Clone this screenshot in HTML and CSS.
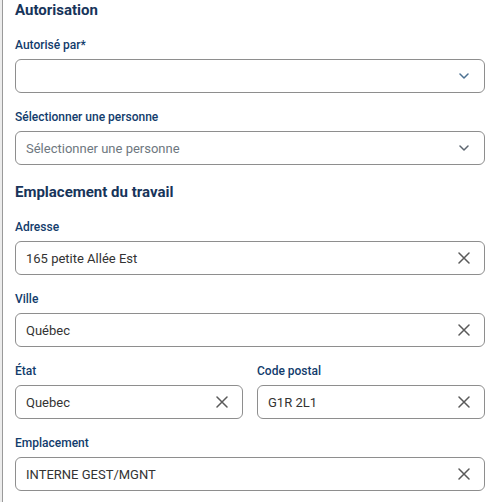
FILE: index.html
```html
<!DOCTYPE html>
<html lang="fr">
<head>
<meta charset="utf-8">
<link rel="stylesheet" href="styles.css">
</head>
<body>
<div class="page">
  <div class="panel">
    <section class="section">
      <h2 class="section-title">Autorisation</h2>
      <div class="fields">
        <div class="field">
          <label class="label">Autorisé par*</label>
          <div class="input">
            <span class="value"></span>
            <svg class="chevron chevron-blue" width="10" height="6" viewBox="0 0 10 6"><polyline points="1,1 5,5 9,1" fill="none" stroke="currentColor" stroke-width="1.5" stroke-linecap="round" stroke-linejoin="round"/></svg>
          </div>
        </div>
        <div class="field">
          <label class="label">Sélectionner une personne</label>
          <div class="input">
            <span class="value placeholder">Sélectionner une personne</span>
            <svg class="chevron" width="10" height="6" viewBox="0 0 10 6"><polyline points="1,1 5,5 9,1" fill="none" stroke="currentColor" stroke-width="1.5" stroke-linecap="round" stroke-linejoin="round"/></svg>
          </div>
        </div>
      </div>
    </section>
    <section class="section">
      <h2 class="section-title">Emplacement du travail</h2>
      <div class="fields">
        <div class="field">
          <label class="label">Adresse</label>
          <div class="input">
            <span class="value">165 petite Allée Est</span>
            <svg class="clear" width="12" height="12" viewBox="0 0 12 12"><path d="M1 1 L11 11 M11 1 L1 11" stroke="currentColor" stroke-width="1.5" stroke-linecap="round"/></svg>
          </div>
        </div>
        <div class="field">
          <label class="label">Ville</label>
          <div class="input">
            <span class="value">Québec</span>
            <svg class="clear" width="12" height="12" viewBox="0 0 12 12"><path d="M1 1 L11 11 M11 1 L1 11" stroke="currentColor" stroke-width="1.5" stroke-linecap="round"/></svg>
          </div>
        </div>
        <div class="row">
          <div class="field">
            <label class="label">État</label>
            <div class="input">
              <span class="value">Quebec</span>
              <svg class="clear" width="12" height="12" viewBox="0 0 12 12"><path d="M1 1 L11 11 M11 1 L1 11" stroke="currentColor" stroke-width="1.5" stroke-linecap="round"/></svg>
            </div>
          </div>
          <div class="field">
            <label class="label">Code postal</label>
            <div class="input">
              <span class="value">G1R 2L1</span>
              <svg class="clear" width="12" height="12" viewBox="0 0 12 12"><path d="M1 1 L11 11 M11 1 L1 11" stroke="currentColor" stroke-width="1.5" stroke-linecap="round"/></svg>
            </div>
          </div>
        </div>
        <div class="field">
          <label class="label">Emplacement</label>
          <div class="input">
            <span class="value">INTERNE GEST/MGNT</span>
            <svg class="clear" width="12" height="12" viewBox="0 0 12 12"><path d="M1 1 L11 11 M11 1 L1 11" stroke="currentColor" stroke-width="1.5" stroke-linecap="round"/></svg>
          </div>
        </div>
      </div>
    </section>
  </div>
</div>
</body>
</html>
```

FILE: styles.css
```css
html, body {
  margin: 0;
  padding: 0;
  background: #ffffff;
}

body {
  font-family: Roboto, "Liberation Sans", Arial, sans-serif;
  width: 496px;
  height: 502px;
  overflow: hidden;
}

.page {
  height: 100%;
  border-left: 2px solid #ececec;
}

.panel {
  height: 100%;
  border-left: 1px solid #9a9a9a;
  padding: 0 11px 0 12px;
  display: flex;
  flex-direction: column;
  gap: 17px;
}

.section {
  display: flex;
  flex-direction: column;
}

.section-title {
  margin: 0 0 17px 0;
  font-size: 15px;
  line-height: 20px;
  font-weight: 700;
  color: #17345a;
}

.fields {
  display: flex;
  flex-direction: column;
  gap: 16px;
}

.field {
  display: flex;
  flex-direction: column;
  gap: 6px;
  min-width: 0;
}

.row {
  display: grid;
  grid-template-columns: 1fr 1fr;
  gap: 14px;
}

.label {
  font-size: 12px;
  line-height: 16px;
  font-weight: 500;
  color: #123c6c;
}

.input {
  box-sizing: border-box;
  height: 34px;
  border: 1px solid #8e8e8e;
  border-radius: 6px;
  padding: 0 14px 0 10px;
  display: flex;
  align-items: center;
  justify-content: space-between;
}

.value {
  font-size: 13px;
  color: #333333;
  white-space: nowrap;
}

.placeholder {
  color: #6e7780;
}

.chevron {
  color: #5d6670;
  margin-right: 1px;
}

.chevron-blue {
  color: #4c7192;
}

.clear {
  color: #5a5a5a;
}
```
